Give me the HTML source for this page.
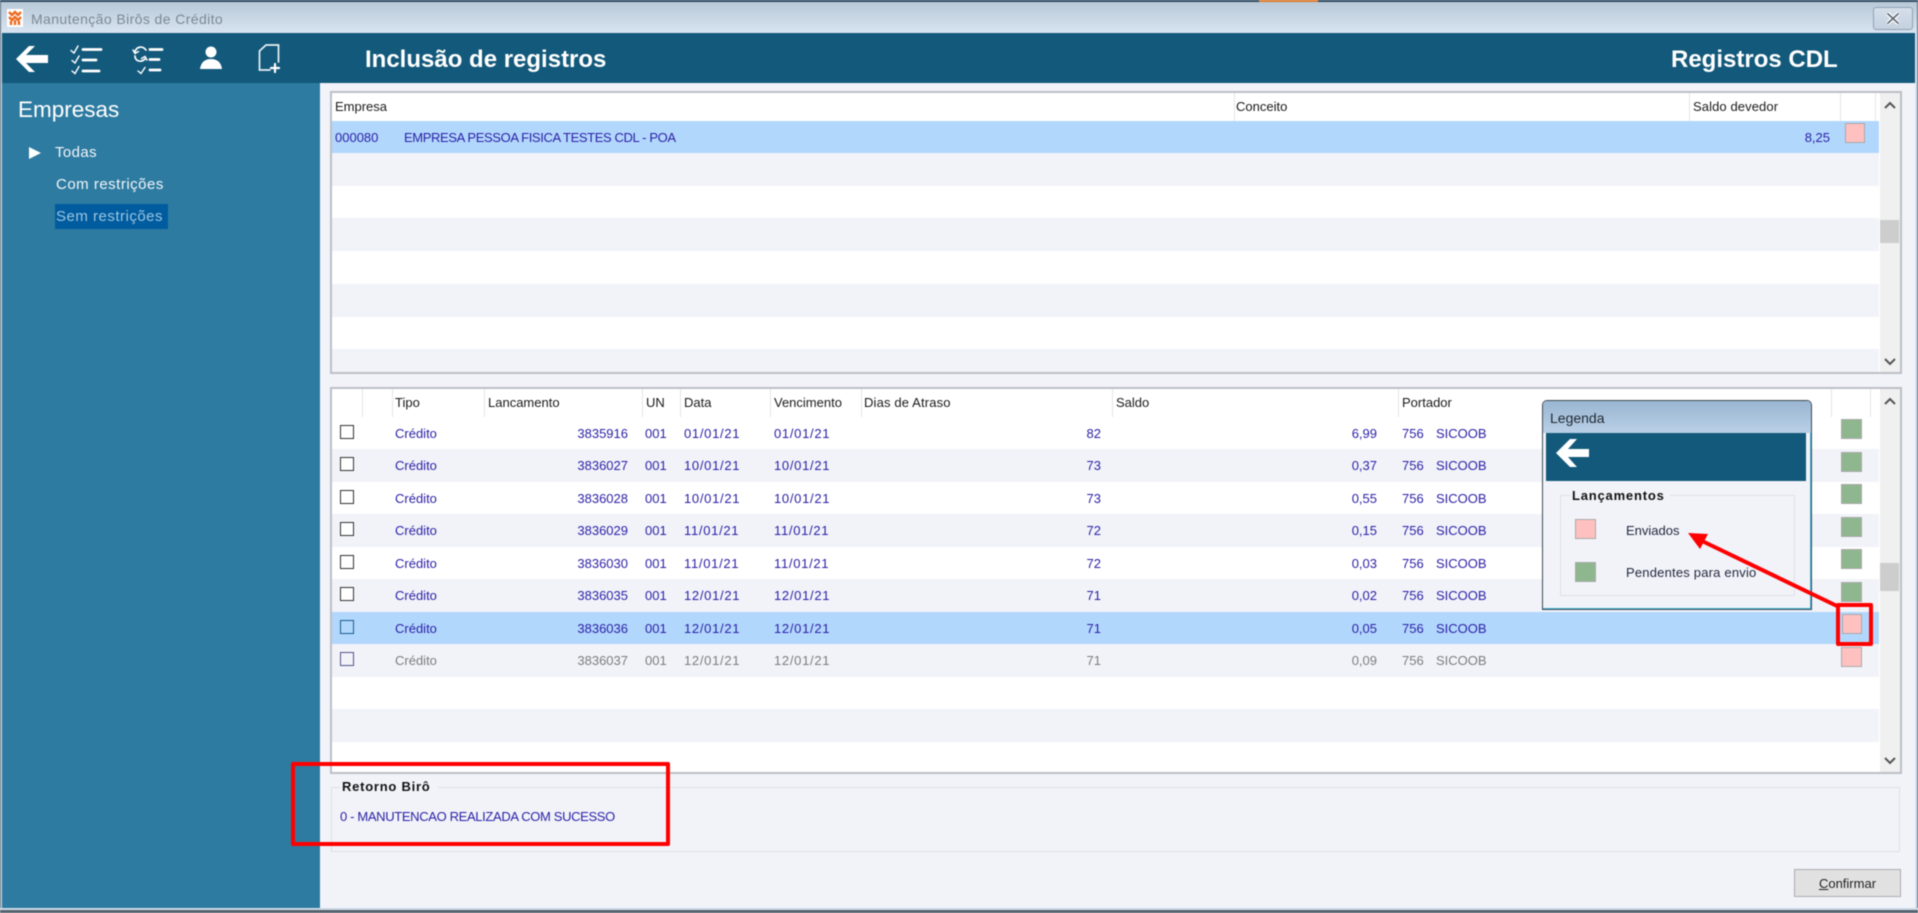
<!DOCTYPE html>
<html lang="pt">
<head>
<meta charset="utf-8">
<title>Manutenção Birôs de Crédito</title>
<style>
html,body{margin:0;padding:0;width:1918px;height:913px;overflow:hidden;background:#dbe5f1}
*{box-sizing:border-box}
#app{position:absolute;left:0;top:0;width:1918px;height:913px;overflow:hidden;font-family:"Liberation Sans",sans-serif;font-size:13px;filter:blur(.45px)}
.a{position:absolute}
.t{position:absolute;white-space:nowrap;line-height:16px}
.r{text-align:right}
.row{position:absolute;left:332px;width:1547px;height:33px;color:#2a1fa5}
.alt{background:#f1f3f9}
.wh{background:#fff}
.sel{background:#b2d7fd}
.hd{color:#1a1a1a}
.sep{position:absolute;width:1px;background:#e6e6e6}
.cb{position:absolute;left:8px;top:8px;width:14px;height:14px;border:1.5px solid #333;background:#fff}
.sw{position:absolute;width:21px;height:20px;border:1px solid #a9a9a9}
.p{background:#ffc0c0}
.g{background:#8fb78f}
.c1{left:63px}
.c2{right:1251px}
.c3{left:313px}
.c4{left:352px;letter-spacing:.7px}
.c5{left:442px;letter-spacing:.7px}
.c6{right:778px}
.c7{right:502px}
.c8{left:1070px}
.c9{left:1104px}
.ty{top:9px}
.gray{color:#7d7d7d}
</style>
</head>
<body>
<div id="app">
  <!-- window chrome -->
  <div class="a" style="left:0;top:0;width:1918px;height:3px;background:#2f4a5e"></div>
  <div class="a" style="left:1259px;top:0;width:59px;height:2px;background:#e07a28"></div>
  <div class="a" style="left:0;top:2px;width:1918px;height:31px;background:linear-gradient(#b9c9d8,#d8e4f1)"></div>
  <div class="a" style="left:0;top:2px;width:1px;height:911px;background:#5b6b78"></div>
  <div class="a" style="left:1917px;top:2px;width:1px;height:911px;background:#5b6b78"></div>
  <svg class="a" style="left:7px;top:9px" width="16" height="18" viewBox="0 0 16 18">
    <rect width="16" height="18" fill="#fff"/>
    <path d="M2 3l3 3 3-3 3 3 3-3M2 8l3 3 3-3 3 3 3-3M4 12v4M8 11v5M12 12v4" stroke="#ee6a1f" stroke-width="2.4" fill="none"/>
  </svg>
  <div class="t" style="left:31px;top:11px;font-size:14px;letter-spacing:.4px;color:#7b8894">Manutenção Birôs de Crédito</div>
  <div class="a" style="left:1873px;top:7px;width:40px;height:23px;border:1px solid #8fa1b3;border-radius:3px;background:linear-gradient(#d5dfea,#c4d1df)"></div>
  <svg class="a" style="left:1885px;top:12px" width="16" height="13" viewBox="0 0 16 13">
    <path d="M2.500 1.500L13.500 11.500M13.500 1.500L2.500 11.500" stroke="#fff" stroke-width="4"/>
    <path d="M2.500 1.500L13.500 11.500M13.500 1.500L2.500 11.500" stroke="#5d6873" stroke-width="1.600"/>
  </svg>

  <!-- content bg -->
  <div class="a" style="left:2px;top:33px;width:1913px;height:875px;background:#f1f3f9"></div>
  <div class="a" style="left:0;top:908px;width:1918px;height:2px;background:#cfdbe9"></div>
  <div class="a" style="left:0;top:910px;width:1918px;height:3px;background:#56626c"></div>

  <!-- toolbar -->
  <div class="a" style="left:2px;top:33px;width:1913px;height:50px;background:#13597b"></div>
  <svg class="a" style="left:0;top:33px" width="300" height="50" viewBox="0 33 300 50" fill="none" stroke="#fff" stroke-linecap="round">
    <path d="M16 59L29 46H35L26 55H48V63H26L35 72H29Z" fill="#fff" stroke="none"/>
    <path d="M71 50.500l3 2.500 4-7M72 60.500l3 2.500 4-7M72 71l3 2.500 4-7" stroke-width="1.400"/>
    <path d="M83 49.500H101M83 60H96M83 71H99" stroke-width="2.800"/>
    <path d="M146 50c-4-5-10-3-11 2M135 56c0 5 6 7 10 3" stroke-width="1.700"/>
    <path d="M133 50l2 3.500 3.500-2M147 60l-2-3.500-3.500 2" stroke-width="1.500"/>
    <path d="M138 71l3 2.500 4-6" stroke-width="1.400"/>
    <path d="M150 49.500H162M150 59.500H159M150 70H160" stroke-width="2.800"/>
    <circle cx="211" cy="52" r="5.500" fill="#fff" stroke="none"/>
    <path d="M200 69C201 62 205 59 211 59C217 59 221 62 222 69Z" fill="#fff" stroke="none"/>
    <path d="M278.500 62V45H266L259.500 51V70H270" stroke-width="1.700" stroke="#e8f0f4"/>
    <path d="M275 64V72M271 68H279" stroke-width="2.200"/>
  </svg>
  <div class="t" style="left:365px;top:46px;font-size:24px;line-height:28px;font-weight:bold;color:#fff">Inclusão de registros</div>
  <div class="t" style="left:1671px;top:46px;font-size:24px;line-height:28px;font-weight:bold;color:#fff">Registros CDL</div>

  <!-- sidebar -->
  <div class="a" style="left:2px;top:83px;width:318px;height:825px;background:#2e7ba1"></div>
  <div class="t" style="left:18px;top:97px;font-size:22.500px;line-height:26px;color:#fff">Empresas</div>
  <svg class="a" style="left:29px;top:147px" width="13" height="12" viewBox="0 0 13 12"><path d="M0 0L12 6L0 12Z" fill="#fff"/></svg>
  <div class="t" style="left:55px;top:144px;font-size:15px;line-height:18px;letter-spacing:.4px;color:#f2f6f9">Todas</div>
  <div class="t" style="left:56px;top:176px;font-size:15px;line-height:18px;letter-spacing:.5px;color:#f2f6f9">Com restrições</div>
  <div class="a" style="left:55px;top:204px;width:113px;height:25px;background:#005c9f"></div>
  <div class="t" style="left:56px;top:208px;font-size:15px;line-height:18px;letter-spacing:.5px;color:#9cc6e0">Sem restrições</div>

  <!-- upper grid -->
  <div class="a" style="left:330px;top:91px;width:1572px;height:283px;background:#fff;border:2px solid #bcc0c5"></div>
  <div class="t hd" style="left:335px;top:99px">Empresa</div>
  <div class="t hd" style="left:1236px;top:99px">Conceito</div>
  <div class="t hd" style="left:1693px;top:99px;letter-spacing:.1px">Saldo devedor</div>
  <div class="sep" style="left:1234px;top:93px;height:28px"></div>
  <div class="sep" style="left:1689px;top:93px;height:28px"></div>
  <div class="sep" style="left:1840px;top:93px;height:28px"></div>
  <div class="sep" style="left:1875px;top:93px;height:28px"></div>
  <div class="row sel" style="top:121px">
    <span class="t ty" style="left:3px">000080</span>
    <span class="t ty" style="left:72px;letter-spacing:-.38px">EMPRESA PESSOA FISICA TESTES CDL - POA</span>
    <span class="t ty r" style="right:49px">8,25</span>
  </div>
  <div class="row alt" style="top:153px"></div>
  <div class="row alt" style="top:218px"></div>
  <div class="row alt" style="top:284px"></div>
  <div class="row alt" style="top:349px;height:23px"></div>
  <div class="sw p" style="left:1845px;top:123px;width:20px;height:20px"></div>
  <div class="a" style="left:1880px;top:93px;width:20px;height:279px;background:#f0f0f0"></div>
  <div class="a" style="left:1880px;top:220px;width:19px;height:23px;background:#cdcdcd"></div>
  <svg class="a" style="left:1884px;top:101px" width="12" height="8" viewBox="0 0 12 8"><path d="M1 7L6 2L11 7" fill="none" stroke="#555" stroke-width="2"/></svg>
  <svg class="a" style="left:1884px;top:358px" width="12" height="8" viewBox="0 0 12 8"><path d="M1 1L6 6L11 1" fill="none" stroke="#555" stroke-width="2"/></svg>

  <!-- lower grid -->
  <div class="a" style="left:330px;top:387px;width:1572px;height:387px;background:#fff;border:2px solid #bcc0c5"></div>
  <div class="sep" style="left:362px;top:389px;height:28px"></div>
  <div class="sep" style="left:392px;top:389px;height:28px"></div>
  <div class="sep" style="left:484px;top:389px;height:28px"></div>
  <div class="sep" style="left:642px;top:389px;height:28px"></div>
  <div class="sep" style="left:680px;top:389px;height:28px"></div>
  <div class="sep" style="left:770px;top:389px;height:28px"></div>
  <div class="sep" style="left:861px;top:389px;height:28px"></div>
  <div class="sep" style="left:1112px;top:389px;height:28px"></div>
  <div class="sep" style="left:1398px;top:389px;height:28px"></div>
  <div class="sep" style="left:1831px;top:389px;height:28px"></div>
  <div class="sep" style="left:1870px;top:389px;height:28px"></div>
  <div class="t hd" style="left:395px;top:395px">Tipo</div>
  <div class="t hd" style="left:488px;top:395px">Lancamento</div>
  <div class="t hd" style="left:646px;top:395px">UN</div>
  <div class="t hd" style="left:684px;top:395px">Data</div>
  <div class="t hd" style="left:774px;top:395px">Vencimento</div>
  <div class="t hd" style="left:864px;top:395px;letter-spacing:.15px">Dias de Atraso</div>
  <div class="t hd" style="left:1116px;top:395px">Saldo</div>
  <div class="t hd" style="left:1402px;top:395px">Portador</div>

  <div class="row wh" style="top:417px"><i class="cb"></i><span class="t ty c1">Crédito</span><span class="t ty c2">3835916</span><span class="t ty c3">001</span><span class="t ty c4">01/01/21</span><span class="t ty c5">01/01/21</span><span class="t ty c6">82</span><span class="t ty c7">6,99</span><span class="t ty c8">756</span><span class="t ty c9">SICOOB</span></div>
  <div class="row alt" style="top:449px"><i class="cb"></i><span class="t ty c1">Crédito</span><span class="t ty c2">3836027</span><span class="t ty c3">001</span><span class="t ty c4">10/01/21</span><span class="t ty c5">10/01/21</span><span class="t ty c6">73</span><span class="t ty c7">0,37</span><span class="t ty c8">756</span><span class="t ty c9">SICOOB</span></div>
  <div class="row wh" style="top:482px"><i class="cb"></i><span class="t ty c1">Crédito</span><span class="t ty c2">3836028</span><span class="t ty c3">001</span><span class="t ty c4">10/01/21</span><span class="t ty c5">10/01/21</span><span class="t ty c6">73</span><span class="t ty c7">0,55</span><span class="t ty c8">756</span><span class="t ty c9">SICOOB</span></div>
  <div class="row alt" style="top:514px"><i class="cb"></i><span class="t ty c1">Crédito</span><span class="t ty c2">3836029</span><span class="t ty c3">001</span><span class="t ty c4">11/01/21</span><span class="t ty c5">11/01/21</span><span class="t ty c6">72</span><span class="t ty c7">0,15</span><span class="t ty c8">756</span><span class="t ty c9">SICOOB</span></div>
  <div class="row wh" style="top:547px"><i class="cb"></i><span class="t ty c1">Crédito</span><span class="t ty c2">3836030</span><span class="t ty c3">001</span><span class="t ty c4">11/01/21</span><span class="t ty c5">11/01/21</span><span class="t ty c6">72</span><span class="t ty c7">0,03</span><span class="t ty c8">756</span><span class="t ty c9">SICOOB</span></div>
  <div class="row alt" style="top:579px"><i class="cb"></i><span class="t ty c1">Crédito</span><span class="t ty c2">3836035</span><span class="t ty c3">001</span><span class="t ty c4">12/01/21</span><span class="t ty c5">12/01/21</span><span class="t ty c6">71</span><span class="t ty c7">0,02</span><span class="t ty c8">756</span><span class="t ty c9">SICOOB</span></div>
  <div class="row sel" style="top:612px"><i class="cb" style="border-color:#1b5a8c;background:transparent"></i><span class="t ty c1">Crédito</span><span class="t ty c2">3836036</span><span class="t ty c3">001</span><span class="t ty c4">12/01/21</span><span class="t ty c5">12/01/21</span><span class="t ty c6">71</span><span class="t ty c7">0,05</span><span class="t ty c8">756</span><span class="t ty c9">SICOOB</span></div>
  <div class="row alt gray" style="top:644px"><i class="cb" style="border-color:#55558a;background:transparent"></i><span class="t ty c1">Crédito</span><span class="t ty c2">3836037</span><span class="t ty c3">001</span><span class="t ty c4">12/01/21</span><span class="t ty c5">12/01/21</span><span class="t ty c6">71</span><span class="t ty c7">0,09</span><span class="t ty c8">756</span><span class="t ty c9">SICOOB</span></div>
  <div class="row alt" style="top:709px"></div>

  <div class="sw g" style="left:1841px;top:419px"></div>
  <div class="sw g" style="left:1841px;top:452px"></div>
  <div class="sw g" style="left:1841px;top:484px"></div>
  <div class="sw g" style="left:1841px;top:517px"></div>
  <div class="sw g" style="left:1841px;top:549px"></div>
  <div class="sw g" style="left:1841px;top:582px"></div>
  <div class="sw p" style="left:1842px;top:614px;width:20px"></div>
  <div class="sw p" style="left:1841px;top:647px"></div>

  <div class="a" style="left:1880px;top:389px;width:20px;height:383px;background:#f0f0f0"></div>
  <div class="a" style="left:1880px;top:563px;width:19px;height:28px;background:#cdcdcd"></div>
  <svg class="a" style="left:1884px;top:397px" width="12" height="8" viewBox="0 0 12 8"><path d="M1 7L6 2L11 7" fill="none" stroke="#555" stroke-width="2"/></svg>
  <svg class="a" style="left:1884px;top:757px" width="12" height="8" viewBox="0 0 12 8"><path d="M1 1L6 6L11 1" fill="none" stroke="#555" stroke-width="2"/></svg>

  <!-- retorno birô -->
  <div class="a" style="left:331px;top:787px;width:1569px;height:65px;border:1px solid #dfe1e5"></div>
  <div class="a" style="left:340px;top:780px;width:98px;height:14px;background:#f1f3f9"></div>
  <div class="t" style="left:342px;top:779px;font-weight:bold;color:#111;letter-spacing:.75px">Retorno Birô</div>
  <div class="t" style="left:340px;top:809px;color:#2a1fa5;letter-spacing:-.35px">0 - MANUTENCAO REALIZADA COM SUCESSO</div>

  <!-- button -->
  <div class="a" style="left:1794px;top:869px;width:107px;height:28px;background:#e1e1e1;border:1px solid #adadad"></div>
  <div class="t" style="left:1794px;top:876px;width:107px;text-align:center;color:#222"><u>C</u>onfirmar</div>

  <!-- legend window -->
  <div class="a" style="left:1542px;top:400px;width:270px;height:210px;background:#f1f3f9;border:1px solid #3d4a55;border-radius:5px 5px 0 0;box-shadow:inset -1px -1px 0 #3fb4d4"></div>
  <div class="a" style="left:1543px;top:401px;width:268px;height:32px;border-radius:4px 4px 0 0;background:linear-gradient(#9ab6d2,#b9d0e7)"></div>
  <div class="t" style="left:1550px;top:410px;font-size:14px;color:#1f2933">Legenda</div>
  <div class="a" style="left:1546px;top:433px;width:260px;height:48px;background:#13597b"></div>
  <svg class="a" style="left:1555px;top:438px" width="36" height="30" viewBox="0 0 36 30"><path d="M1 15L15 1H22L13 11H34V19H13L22 29H15Z" fill="#fff"/></svg>
  <div class="a" style="left:1560px;top:495px;width:235px;height:101px;border:1px solid #dfe1e5"></div>
  <div class="a" style="left:1570px;top:488px;width:100px;height:14px;background:#f1f3f9"></div>
  <div class="t" style="left:1572px;top:488px;font-weight:bold;color:#111;letter-spacing:.8px">Lançamentos</div>
  <div class="sw p" style="left:1575px;top:519px"></div>
  <div class="sw g" style="left:1575px;top:562px"></div>
  <div class="t" style="left:1626px;top:523px;color:#25283d">Enviados</div>
  <div class="t" style="left:1626px;top:565px;color:#25283d;letter-spacing:.2px">Pendentes para envio</div>

  <!-- annotations -->
  <div class="a" style="left:291px;top:762px;width:379px;height:84px;border:4px solid #ff0000;border-radius:2px"></div>
  <div class="a" style="left:1836px;top:603px;width:37px;height:43px;border:4px solid #ff0000;border-radius:2px"></div>
  <svg class="a" style="left:1680px;top:525px" width="170" height="90" viewBox="1680 525 170 90">
    <path d="M1837 606L1700 540" stroke="#ff0000" stroke-width="4" fill="none"/>
    <path d="M1688 533L1708 534L1700 549Z" fill="#ff0000"/>
  </svg>
</div>
</body>
</html>
